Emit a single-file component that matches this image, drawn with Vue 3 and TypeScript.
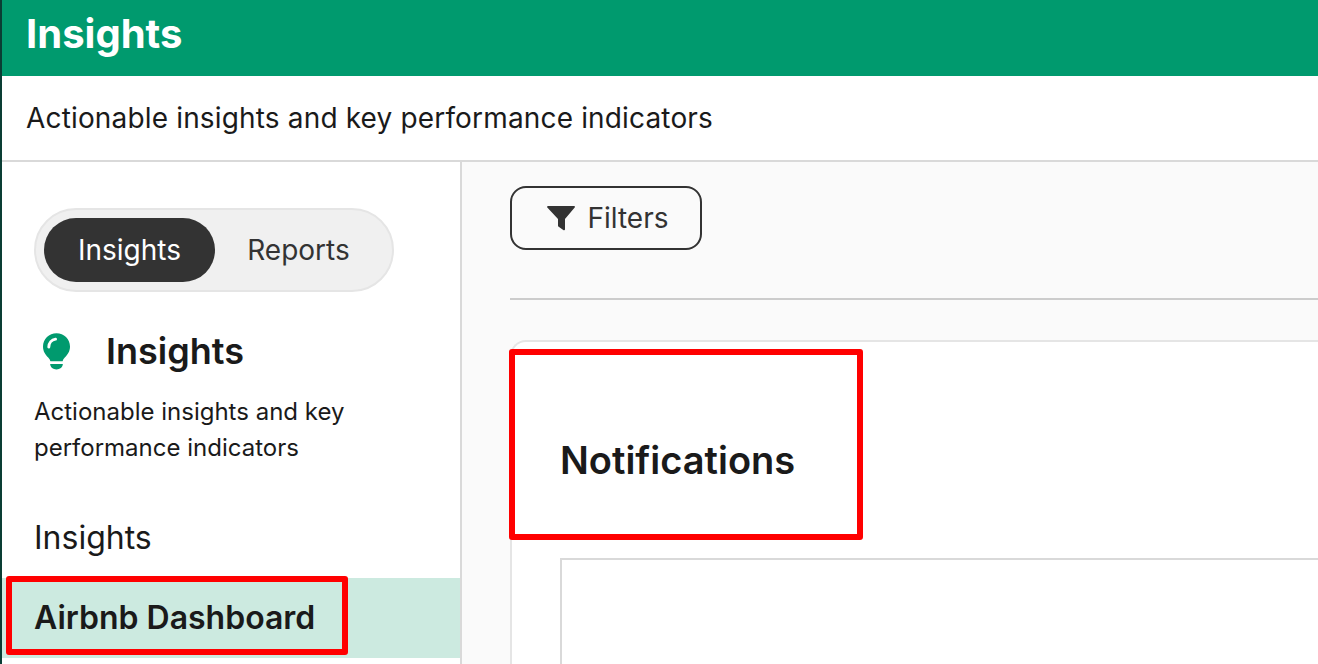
<script setup lang="ts">
import { ref } from 'vue';

const tabs = ['Insights', 'Reports'];
const activeTab = ref<string>('Insights');
</script>

<template>
  <div class="page">
    <header class="page__title">Insights</header>
    <div class="page__subtitle">Actionable insights and key performance indicators</div>

    <div class="page__body">
      <aside class="sidebar">
        <div class="tabs">
          <div
            v-for="tab in tabs"
            :key="tab"
            class="tabs__item"
            :class="{ 'tabs__item--active': activeTab === tab }"
            @click="activeTab = tab"
          >
            {{ tab }}
          </div>
        </div>

        <div class="sidebar__head">
          <svg class="sidebar__icon" viewBox="0 0 28 38" width="27" height="37">
            <path
              fill="#009a6e"
              d="M14 0C6.300 0 0 6.100 0 13.700c0 5 2.500 8.600 5.400 11.400 1.200 1.200 2 2.600 2.300 4.100h12.600c.3-1.500 1.100-2.900 2.300-4.100C25.500 22.300 28 18.700 28 13.700 28 6.100 21.700 0 14 0z"
            />
            <path
              fill="none"
              stroke="#ffffff"
              stroke-width="3"
              stroke-linecap="round"
              d="M6 14.500c.2-4.400 3-7.700 7-8.300"
            />
            <path fill="#009a6e" d="M7.400 32h13.200c-.3 3.400-3 5.600-6.600 5.600s-6.300-2.200-6.600-5.600z" />
          </svg>
          <h2 class="sidebar__title">Insights</h2>
        </div>
        <p class="sidebar__desc">Actionable insights and key performance indicators</p>

        <div class="sidebar__section">Insights</div>
        <div class="sidebar__link">
          Airbnb Dashboard
          <span class="mark mark--link"></span>
        </div>
      </aside>

      <main class="content">
        <button class="filters" type="button">
          <svg viewBox="0 0 28 25" width="28" height="25">
            <path
              fill="#333333"
              d="M1 0h26c.8 0 1.200.9.700 1.500L18 13v10.200c0 .9-1 1.400-1.700.9l-5-3.700c-.2-.2-.3-.5-.3-.8V13L.3 1.500C-.2.900.2 0 1 0z"
            />
          </svg>
          Filters
        </button>

        <div class="content__rule"></div>

        <section class="card">
          <h3 class="card__title">
            Notifications
            <span class="mark mark--title"></span>
          </h3>
          <div class="card__box"></div>
        </section>
      </main>
    </div>
  </div>
</template>

<style scoped>
.page {
  height: 664px;
  overflow: hidden;
  display: flex;
  flex-direction: column;
  border-left: 2px solid #0a3d34;
  box-sizing: border-box;
  background: #ffffff;
  color: #1a1a1a;
  font-family: Inter, 'Liberation Sans', sans-serif;
}

.page__title {
  flex: none;
  height: 76px;
  box-sizing: border-box;
  padding: 12px 0 0 24px;
  background: #009a6e;
  color: #ffffff;
  font-size: 40px;
  font-weight: 700;
  line-height: 44px;
}

.page__subtitle {
  flex: none;
  height: 86px;
  box-sizing: border-box;
  padding: 25px 0 0 24px;
  border-bottom: 2px solid #d9d9d9;
  font-size: 28px;
  letter-spacing: 0.16px;
  line-height: 34px;
}

.page__body {
  flex: 1;
  min-height: 0;
  display: flex;
}

.sidebar {
  flex: none;
  width: 460px;
  box-sizing: border-box;
  padding-top: 46px;
  border-right: 2px solid #d9d9d9;
}

.tabs {
  width: 360px;
  height: 84px;
  box-sizing: border-box;
  margin-left: 32px;
  padding: 8px;
  display: flex;
  background: #f0f0f0;
  border: 2px solid #e5e5e5;
  border-radius: 42px;
}

.tabs__item {
  height: 64px;
  display: flex;
  align-items: center;
  justify-content: center;
  border-radius: 32px;
  color: #333333;
  font-size: 28px;
  cursor: pointer;
}

.tabs__item:first-child {
  width: 171px;
}

.tabs__item:last-child {
  flex: 1;
  padding-right: 2px;
}

.tabs__item--active {
  background: #333333;
  color: #ffffff;
}

.sidebar__head {
  display: flex;
  align-items: center;
  margin: 41px 0 0 41px;
  height: 37px;
}

.sidebar__title {
  margin: 0 0 0 36px;
  font-size: 36px;
  font-weight: 600;
  line-height: 37px;
}

.sidebar__desc {
  margin: 24px 0 0 32px;
  width: 340px;
  font-size: 24px;
  line-height: 36px;
}

.sidebar__section {
  margin: 52px 0 0 32px;
  font-size: 32px;
  line-height: 40px;
}

.sidebar__link {
  position: relative;
  height: 80px;
  box-sizing: border-box;
  margin-top: 20px;
  padding: 20px 0 0 32px;
  background: #cceae0;
  font-size: 32px;
  font-weight: 600;
  line-height: 40px;
}

.content {
  flex: 1;
  min-width: 0;
  box-sizing: border-box;
  padding: 24px 0 0 48px;
  background: #fafafa;
}

.filters {
  width: 192px;
  height: 64px;
  padding: 0 0 0 4px;
  display: flex;
  align-items: center;
  justify-content: center;
  gap: 12px;
  background: transparent;
  border: 2px solid #333333;
  border-radius: 16px;
  color: #333333;
  font-family: inherit;
  font-size: 28px;
}

.content__rule {
  height: 2px;
  margin-top: 48px;
  background: #cccccc;
}

.card {
  margin-top: 40px;
  height: 400px;
  box-sizing: border-box;
  padding: 0 0 0 48px;
  background: #ffffff;
  border: 2px solid #e5e5e5;
  border-right: none;
  border-radius: 16px 0 0 0;
}

.card__title {
  position: relative;
  margin: 0;
  padding-top: 93px;
  font-size: 38px;
  font-weight: 600;
  line-height: 50px;
}

.card__box {
  height: 300px;
  margin-top: 73px;
  background: #ffffff;
  border: 2px solid #d9d9d9;
  border-right: none;
}

.mark {
  position: absolute;
  box-sizing: border-box;
  border: 6px solid #ff0000;
  border-radius: 3px;
  pointer-events: none;
}

.mark--link {
  left: 4px;
  top: -2px;
  width: 342px;
  height: 79px;
}

.mark--title {
  left: -51px;
  top: 7px;
  width: 354px;
  height: 191px;
}
</style>

<style>
html,
body {
  margin: 0;
  overflow: hidden;
}
</style>
